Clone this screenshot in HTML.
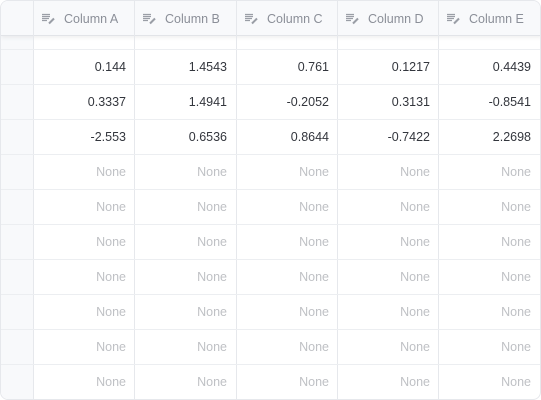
<!DOCTYPE html>
<html><head><style>
*{margin:0;padding:0;box-sizing:border-box}
body{width:541px;height:400px;background:#fff;font-family:"Liberation Sans",sans-serif;overflow:hidden;position:relative}
.wrap{position:absolute;left:0;top:0;width:541px;height:400px;border:1px solid #e6e8ec;border-radius:8px;overflow:hidden;background:#fff}
.idx{position:absolute;left:0;top:0;width:32px;height:400px;background:#f8f9fb}
.hdr{position:absolute;left:0;top:0;width:541px;height:35px;background:#f8f9fb;border-bottom:1px solid #e2e4e8;box-shadow:0 2px 4px rgba(0,0,0,0.06)}
.v{position:absolute;top:0;width:1px;height:400px;background:#e6e8ec}
.h{position:absolute;left:0;width:541px;height:1px;background:#eceef1}
.hc{position:absolute;top:1px;height:35px;line-height:35px;font-size:12.5px;color:#8b8f98}
.hc svg{position:absolute;left:9px;top:11px}
.hc span{position:absolute;left:31px}
.c{position:absolute;font-size:12.5px;text-align:right;height:35px;line-height:35px;width:93px;color:#33363d}
.n{color:#bfc1c5}
</style></head><body>
<div class="wrap">
<div class="idx"></div>
<div class="hdr"></div>
<div id="g"></div>
</div>
<script>
var xs=[0,32,133,235,336,437,539];
var g=document.getElementById('g'),h='';
for(var i=1;i<6;i++)h+='<div class="v" style="left:'+xs[i]+'px"></div>';
for(var y=48;y<400;y+=35)h+='<div class="h" style="top:'+y+'px"></div>';
var names=['A','B','C','D','E'];
for(i=0;i<5;i++){h+='<div class="hc" style="left:'+xs[i+1]+'px;width:101px"><svg width="14" height="12" viewBox="0 0 14 12"><path d="M0 1.5H8M0 3.5H8M0 5.5H7M0 7.5H5" stroke="#9a9ea6" stroke-width="1.2"/><path d="M7 10.5L12 5.5" stroke="#9a9ea6" stroke-width="2"/></svg><span>Column '+names[i]+'</span></div>';}
var d=[['0.144','1.4543','0.761','0.1217','0.4439'],['0.3337','1.4941','-0.2052','0.3131','-0.8541'],['-2.553','0.6536','0.8644','-0.7422','2.2698']];
for(var r=0;r<10;r++){for(i=0;i<5;i++){var t=r<3?d[r][i]:'None';h+='<div class="c'+(r<3?'':' n')+'" style="left:'+(xs[i+1])+'px;top:'+(49+r*35)+'px">'+t+'</div>';}}
g.innerHTML=h;
</script>
</body></html>
